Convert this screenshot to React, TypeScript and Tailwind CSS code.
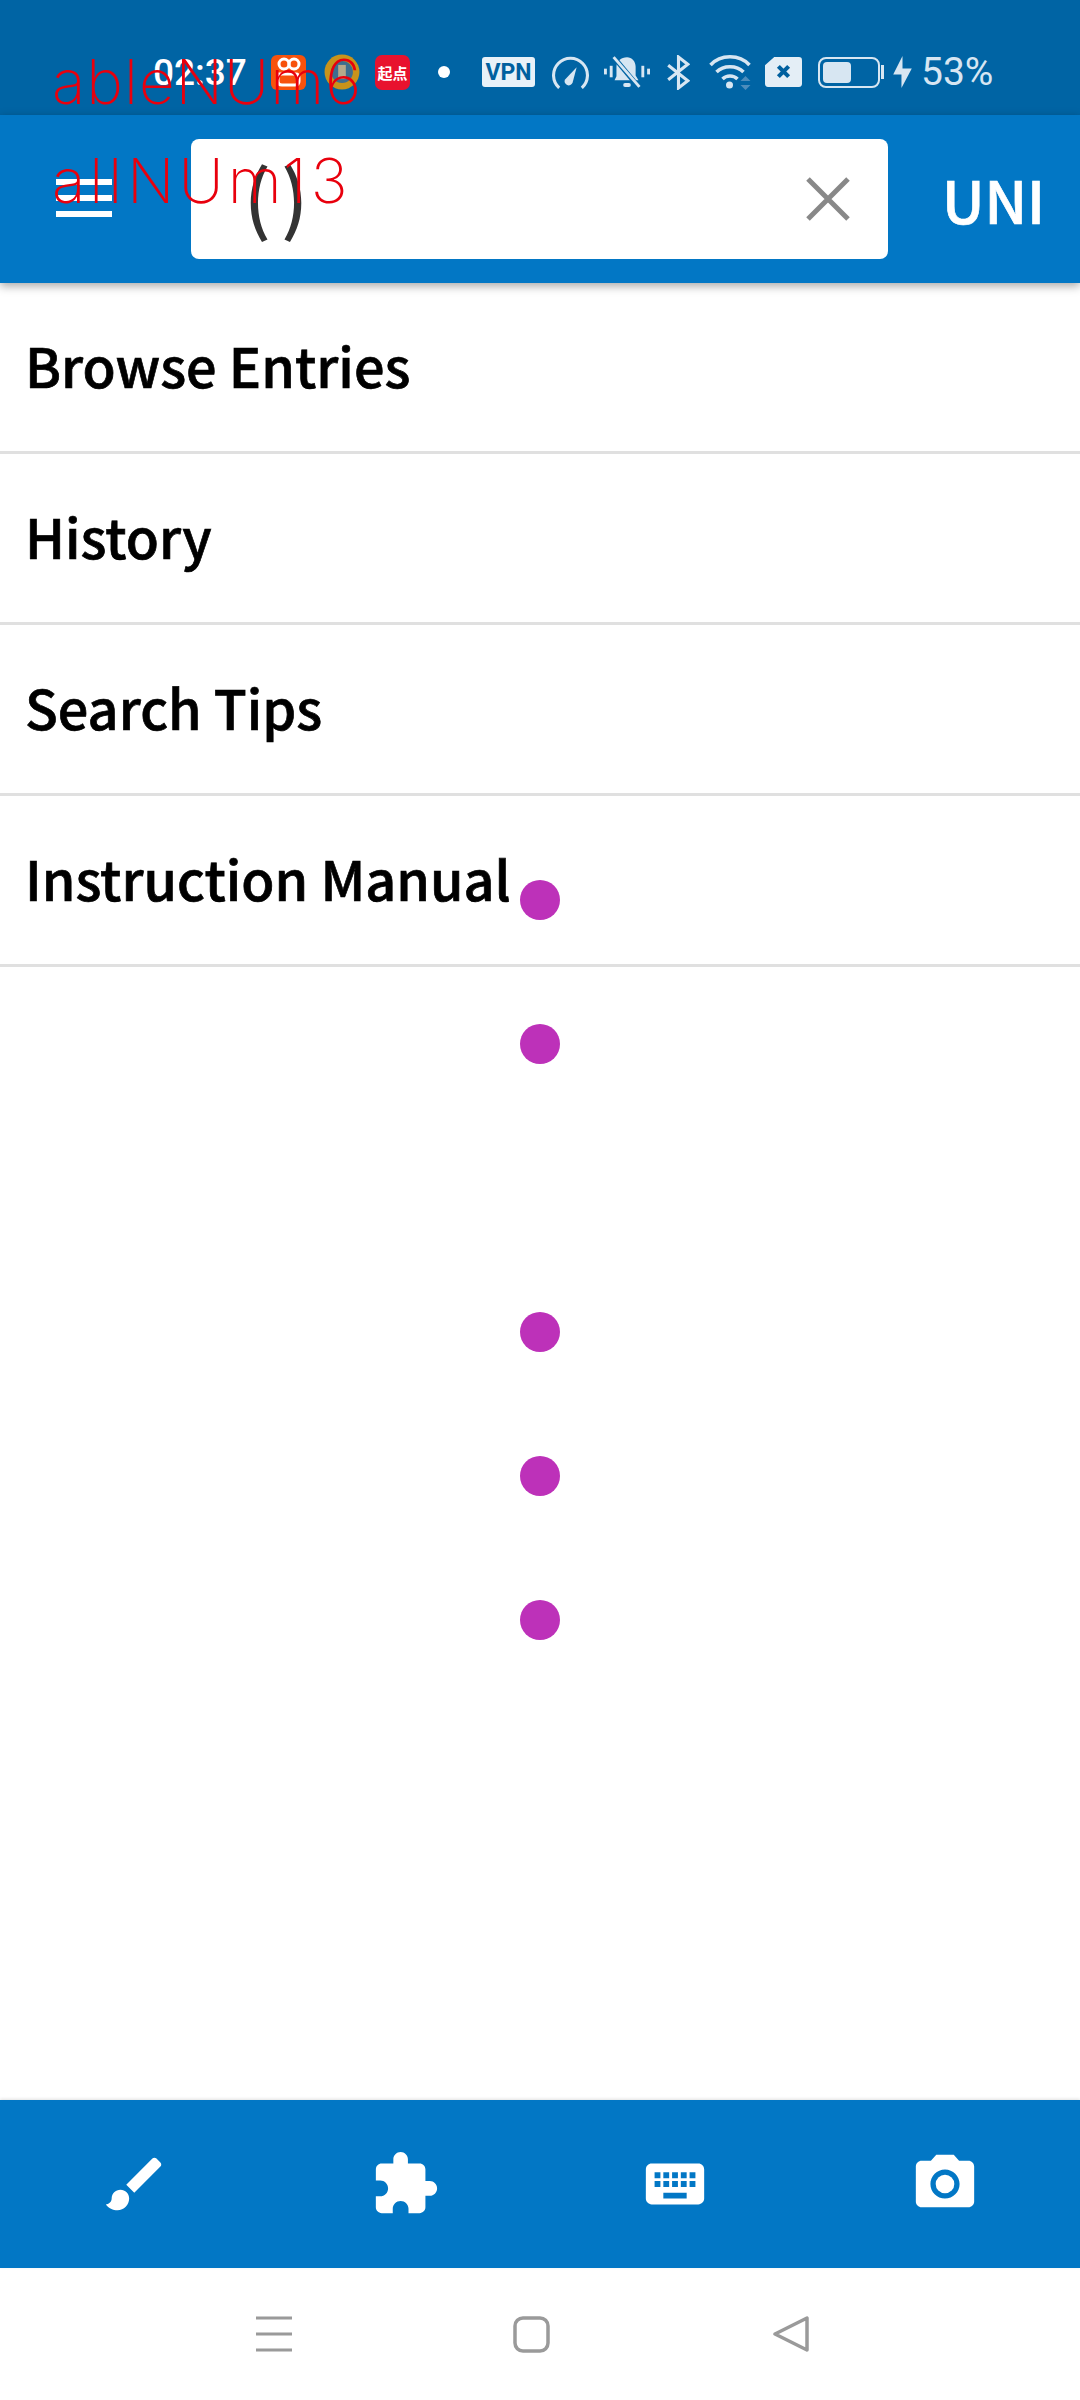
import React from 'react';

const dots = [0, 1, 3, 4, 5];
const menu = ['Browse Entries', 'History', 'Search Tips', 'Instruction Manual'];

const StatusIcons = () => (
  <div className="flex items-center absolute left-0 top-0 h-[115px] w-full pt-[29px]">
    <span className="ml-[153px] w-[118px] text-[37px] leading-none text-white font-['Roboto',sans-serif] font-medium">02:37</span>
    <svg width="35" height="35" viewBox="0 0 35 35">
      <rect width="35" height="35" rx="6" fill="#f7520c" />
      <circle cx="13" cy="9" r="5" fill="none" stroke="#fff" strokeWidth="3" />
      <circle cx="23" cy="9" r="5" fill="none" stroke="#fff" strokeWidth="3" />
      <path d="M7 19h18c3 0 3 2 3 4v3c0 3-2 4-4 4H11c-3 0-4-2-4-4z" fill="none" stroke="#fff" strokeWidth="3" />
    </svg>
    <svg width="36" height="36" viewBox="0 0 33 33" className="ml-[18px]">
      <circle cx="16.5" cy="16.5" r="16" fill="#c8931a" />
      <circle cx="16.5" cy="16.5" r="10" fill="#3d6e8f" />
      <rect x="13" y="10" width="7" height="13" fill="#b5a98a" />
    </svg>
    <div className="ml-[15px] w-[35px] h-[35px] rounded-[7px] bg-[#e8122e] flex items-center justify-center text-white text-[15px] leading-none font-bold font-['Noto_Sans_CJK_SC',sans-serif]">起点</div>
    <div className="ml-[28px] w-[12px] h-[12px] rounded-full bg-white" />
    <div className="ml-[32px] w-[53px] h-[30px] rounded-[3px] bg-[#e8f1f8] flex items-center justify-center text-[#00609f] text-[23px] leading-none font-bold font-['Roboto',sans-serif]">VPN</div>
    <svg width="37" height="33" viewBox="0 0 36 32" className="ml-[17px]" fill="none" stroke="#d7e6f2" strokeWidth="3">
      <path d="M7 31A16.5 16.5 0 1 1 29 31" />
      <path d="M12.5 23L24 11 20 26a4 4 0 0 1-7.5-3z" fill="#d7e6f2" stroke="none" />
    </svg>
    <svg width="46" height="35" viewBox="0 0 48 36" className="ml-[15px]" fill="#d7e6f2">
      <rect x="0" y="14" width="3" height="6" />
      <rect x="6" y="11" width="3" height="12" />
      <rect x="39" y="11" width="3" height="12" />
      <rect x="45" y="14" width="3" height="6" />
      <path d="M24 2c5 0 9 4 9 10v9l3 5H11l2-4v-10c0-6 5-10 11-10z" />
      <rect x="20" y="29" width="8" height="4" rx="2" />
      <path d="M11 3l25 30" stroke="#0064a4" strokeWidth="5" />
      <path d="M10 2l27 31" stroke="#d7e6f2" strokeWidth="3" />
    </svg>
    <svg width="23" height="35" viewBox="0 0 22 34" className="ml-[17px]" fill="none" stroke="#d7e6f2" strokeWidth="3">
      <path d="M1 10l19 15-9 7V2l9 7L1 24" />
    </svg>
    <svg width="45" height="36" viewBox="0 0 44 36" className="ml-[18px]" fill="none" stroke="#d7e6f2" strokeWidth="3.5">
      <path d="M2 11c10-11 29-11 39 0" />
      <path d="M8 18c7-7 20-7 27 0" />
      <path d="M14 25c4-4 11-4 15 0" />
      <circle cx="21" cy="31" r="3.5" fill="#d7e6f2" stroke="none" />
      <path d="M37 22l5 5h-10zM37 36l5-5h-10z" fill="#4d8dbc" stroke="none" />
    </svg>
    <svg width="37" height="30" viewBox="0 0 36 29" className="ml-[12px]">
      <path d="M9 0h24c2 0 3 1 3 3v23c0 2-1 3-3 3H3c-2 0-3-1-3-3V8z" fill="#e4eef6" />
      <path d="M13 9l10 10M23 9L13 19" stroke="#00609f" strokeWidth="4" />
    </svg>
    <div className="ml-[16px] flex items-center">
      <div className="w-[62px] h-[31px] rounded-[8px] border-[2px] border-[#d7e6f2] p-[3px]">
        <div className="w-[28px] h-full rounded-[4px] bg-[#d7e6f2]" />
      </div>
      <div className="ml-[1px] w-[3px] h-[14px] bg-[#d7e6f2]" />
    </div>
    <svg width="19" height="32" viewBox="0 0 18 31" className="ml-[9px]" fill="#d7e6f2">
      <path d="M9 0v12h9L8 31V18H0z" />
    </svg>
    <span className="ml-[9px] text-[39px] leading-none text-[#d7e6f2] font-['Roboto',sans-serif]">53%</span>
  </div>
);

export default function App() {
  return (
    <div className="relative h-[2400px] w-[1080px] flex flex-col overflow-hidden bg-white">
      <div className="h-[115px] shrink-0 bg-[#0064a4]" />
      <header className="relative z-10 h-[168px] shrink-0 bg-[#0277c5] shadow-[0_3px_9px_rgba(0,0,0,0.35)] flex items-center">
        <div className="ml-[56px] w-[56px] flex flex-col gap-[10px] mt-[-2px]">
          <div className="h-[6px] bg-white" />
          <div className="h-[6px] bg-white" />
          <div className="h-[6px] bg-white" />
        </div>
        <div className="ml-[79px] w-[697px] h-[120px] rounded-[8px] bg-white flex items-center justify-between">
          <span className="ml-[53px] mt-[-10px] text-[76px] leading-none tracking-[10px] font-medium text-[#333] font-['Noto_Sans_CJK_SC',sans-serif]">()</span>
          <svg width="46" height="46" viewBox="0 0 46 46" className="mr-[37px]" stroke="#888" strokeWidth="5">
            <path d="M3 3l40 40M43 3L3 43" />
          </svg>
        </div>
        <span className="ml-[54px] text-[58px] leading-none text-white font-medium [-webkit-text-stroke:0.7px_white] font-['Noto_Sans_CJK_SC',sans-serif]">UNI</span>
      </header>
      <nav className="flex-1">
        {menu.map((item) => (
          <div key={item} className="h-[171px] pl-[25px] pb-[4px] flex items-center border-b-[3px] border-[#e0e0e0]">
            <span className="text-[54px] leading-none font-medium text-black [-webkit-text-stroke:0.7px_black] font-['Noto_Sans_CJK_SC',sans-serif]">{item}</span>
          </div>
        ))}
      </nav>
      <footer className="relative h-[168px] shrink-0 bg-[#0277c5] shadow-[0_-1px_3px_rgba(0,0,0,0.12)] grid grid-cols-4 items-center justify-items-center text-white">
        <svg width="70" height="70" viewBox="0 0 24 24" fill="currentColor">
          <path d="M7 14c-1.66 0-3 1.34-3 3 0 1.31-1.16 2-2 2 .92 1.22 2.49 2 4 2 2.21 0 4-1.79 4-4 0-1.66-1.34-3-3-3zm13.71-9.37l-1.34-1.34c-.39-.39-1.02-.39-1.41 0L9 12.25 11.75 15l8.96-8.96c.39-.39.39-1.02 0-1.41z" />
        </svg>
        <svg width="70" height="70" viewBox="0 0 24 24" fill="currentColor">
          <path d="M20.5 11H19V7c0-1.1-.9-2-2-2h-4V3.5C13 2.12 11.88 1 10.5 1S8 2.12 8 3.5V5H4c-1.1 0-1.99.9-1.99 2v3.8H3.5c1.49 0 2.7 1.21 2.7 2.7s-1.21 2.7-2.7 2.7H2V20c0 1.1.9 2 2 2h3.8v-1.5c0-1.49 1.21-2.7 2.7-2.7 1.49 0 2.7 1.21 2.7 2.7V22H17c1.1 0 2-.9 2-2v-4h1.5c1.38 0 2.5-1.12 2.5-2.5S21.88 11 20.5 11z" />
        </svg>
        <svg width="70" height="70" viewBox="0 0 24 24" fill="currentColor">
          <path d="M20 5H4c-1.1 0-1.99.9-1.99 2L2 17c0 1.1.9 2 2 2h16c1.1 0 2-.9 2-2V7c0-1.1-.9-2-2-2zm-9 3h2v2h-2V8zm0 3h2v2h-2v-2zM8 8h2v2H8V8zm0 3h2v2H8v-2zm-1 2H5v-2h2v2zm0-3H5V8h2v2zm9 7H8v-2h8v2zm0-4h-2v-2h2v2zm0-3h-2V8h2v2zm3 3h-2v-2h2v2zm0-3h-2V8h2v2z" />
        </svg>
        <svg width="70" height="70" viewBox="0 0 24 24" fill="currentColor">
          <path d="M9 2L7.17 4H4c-1.1 0-2 .9-2 2v12c0 1.1.9 2 2 2h16c1.1 0 2-.9 2-2V6c0-1.1-.9-2-2-2h-3.17L15 2H9zm3 15c-2.76 0-5-2.24-5-5s2.24-5 5-5 5 2.24 5 5-2.24 5-5 5z" />
          <circle cx="12" cy="12" r="3.2" />
        </svg>
      </footer>
      <div className="h-[132px] shrink-0 bg-white flex items-center">
        <svg width="36" height="36" viewBox="0 0 36 36" className="ml-[256px]" stroke="#9a9a9a" strokeWidth="3">
          <path d="M0 2h36M0 18h36M0 34h36" />
        </svg>
        <svg width="37" height="37" viewBox="0 0 37 37" className="ml-[221px]" fill="none" stroke="#9a9a9a" strokeWidth="3.5">
          <rect x="2" y="2" width="33" height="33" rx="8" />
        </svg>
        <svg width="36" height="36" viewBox="0 0 36 36" className="ml-[223px]" fill="none" stroke="#9a9a9a" strokeWidth="3.5" strokeLinejoin="round">
          <path d="M2 18L34 2v32z" />
        </svg>
      </div>
      <StatusIcons />
      {/* debug overlay drawn on top of the screen */}
      <div className="absolute z-20 left-[52px] top-[51px] text-[#e8000d] text-[62px] leading-none tracking-[1px] font-extralight font-['Inter',sans-serif]">ableNUm6</div>
      <div className="absolute z-20 left-[52px] top-[150px] text-[#e8000d] text-[62px] leading-none tracking-[4px] font-extralight font-['Inter',sans-serif]">alINUm13</div>
      <div className="absolute z-20 left-[520px] top-[880px] flex flex-col gap-[104px]">
        {[0, 1, 2, 3, 4, 5].map((i) => (
          <div key={i} className={dots.includes(i) ? 'w-[40px] h-[40px] rounded-full bg-[#bd31b9]' : 'w-[40px] h-[40px]'} />
        ))}
      </div>
    </div>
  );
}
